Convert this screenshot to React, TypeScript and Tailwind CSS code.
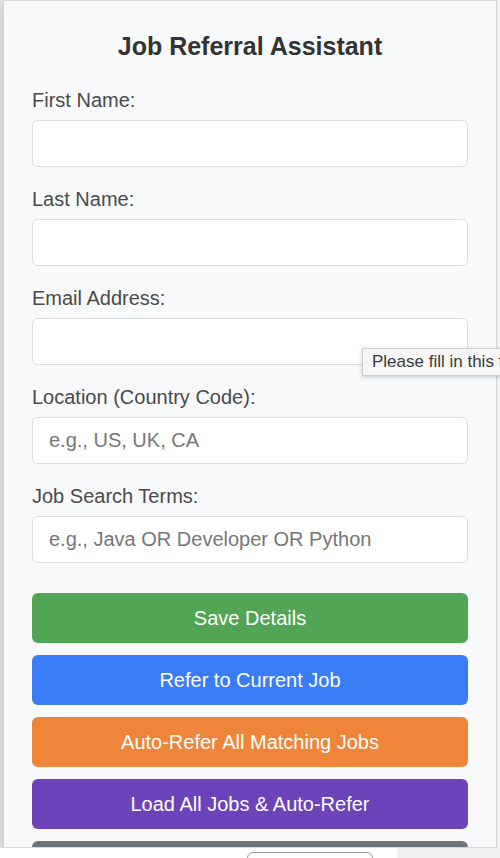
import React from "react";

const fields = [
  { label: "First Name:", placeholder: "" },
  { label: "Last Name:", placeholder: "" },
  { label: "Email Address:", placeholder: "" },
  { label: "Location (Country Code):", placeholder: "e.g., US, UK, CA" },
  { label: "Job Search Terms:", placeholder: "e.g., Java OR Developer OR Python" },
];

export default function App() {
  return (
    <div
      className="relative w-[500px] h-[858px] overflow-hidden bg-[#f1f2f3]"
      style={{ fontFamily: '"Liberation Sans", Arial, sans-serif' }}
    >
      <div className="flex">
        <div className="w-[3px] h-[848px] bg-[#e4e5e7]" />
        <div className="w-[494px] h-[848px] overflow-hidden bg-[#f8f9fa] border border-[#d6d7d9] shadow-[0_2px_8px_rgba(0,0,0,0.18)] px-[28px] pt-[30px]">
          <h1 className="text-center text-[25px] leading-[30px] font-bold text-[#333333] mb-[28px]">
            Job Referral Assistant
          </h1>
          <div className="flex flex-col gap-[21px]">
            {fields.map((f) => (
              <div key={f.label} className="flex flex-col">
                <label className="text-[20px] leading-[23px] text-[#4a4a4a] mb-[8px]">
                  {f.label}
                </label>
                <input
                  className="h-[47px] w-full rounded-[6px] border border-[#dcdddf] bg-white px-[16px] text-[20px] text-[#333] placeholder:text-[#767676] outline-none"
                  placeholder={f.placeholder}
                />
              </div>
            ))}
          </div>
          <div className="mt-[30px] flex flex-col gap-[12px]">
            <button className="h-[50px] w-full rounded-[6px] bg-[#52a553] text-white text-[20px]">
              Save Details
            </button>
            <button className="h-[50px] w-full rounded-[6px] bg-[#3a7bf6] text-white text-[20px]">
              Refer to Current Job
            </button>
            <button className="h-[50px] w-full rounded-[6px] bg-[#ee8538] text-white text-[20px]">
              Auto-Refer All Matching Jobs
            </button>
            <button className="h-[50px] w-full rounded-[6px] bg-[#6a44b8] text-white text-[20px]">
              Load All Jobs &amp; Auto-Refer
            </button>
            <div className="h-[50px] w-full rounded-[6px] bg-[#6c747c]" />
          </div>
        </div>
        <div className="w-[3px] h-[848px] bg-[#eef0f2]" />
      </div>
      <div className="flex h-[10px]">
        <div className="w-[397px] bg-white">
          <div className="ml-[247px] mt-[4px] w-[126px] h-[20px] rounded-[6px] border border-[#9a9a9a]" />
        </div>
        <div className="flex-1 bg-[#f0f0f0]" />
      </div>
      <div className="absolute left-[362px] top-[348px] h-[28px] w-[200px] border border-[#cfcfcf] bg-[#f6f6f6] shadow-[0_1px_4px_rgba(0,0,0,0.2)] pl-[9px] text-[17px] leading-[26px] text-[#3c3c3c] whitespace-nowrap">
        Please fill in this field.
      </div>
    </div>
  );
}
